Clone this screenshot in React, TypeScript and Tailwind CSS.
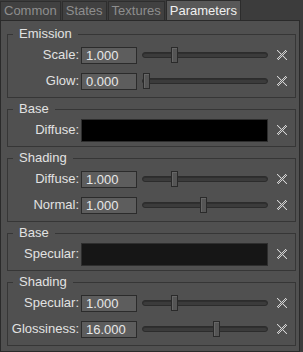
import React from "react";

type SliderRow = { label: string; value: string; thumb: number };
type ColorRow = { label: string; color: string };
type Group = { title: string; sliders?: SliderRow[]; colors?: ColorRow[] };

const tabs = ["Common", "States", "Textures", "Parameters"];

const groups: Group[] = [
  {
    title: "Emission",
    sliders: [
      { label: "Scale:", value: "1.000", thumb: 29 },
      { label: "Glow:", value: "0.000", thumb: 1 },
    ],
  },
  { title: "Base", colors: [{ label: "Diffuse:", color: "#000000" }] },
  {
    title: "Shading",
    sliders: [
      { label: "Diffuse:", value: "1.000", thumb: 29 },
      { label: "Normal:", value: "1.000", thumb: 58 },
    ],
  },
  { title: "Base", colors: [{ label: "Specular:", color: "#161616" }] },
  {
    title: "Shading",
    sliders: [
      { label: "Specular:", value: "1.000", thumb: 29 },
      { label: "Glossiness:", value: "16.000", thumb: 71 },
    ],
  },
];

// checkered "x" reset glyph, 10x10
function ResetIcon() {
  const cells: React.ReactNode[] = [];
  for (let y = 0; y < 10; y++) {
    for (let x = 0; x < 10; x++) {
      const onX = Math.abs(x - y) <= 1 || Math.abs(x + y - 9) <= 1;
      if (!onX) continue;
      const light = (x + y) % 2 === 0;
      cells.push(
        <rect key={`${x}-${y}`} x={x} y={y} width={1} height={1} fill={light ? "#d2d2d2" : "#626262"} />
      );
    }
  }
  return (
    <svg width={10} height={10} viewBox="0 0 10 10" shapeRendering="crispEdges" className="shrink-0">
      {cells}
    </svg>
  );
}

function Slider({ thumb }: { thumb: number }) {
  return (
    <div className="relative ml-[5px] h-[16px] w-[126px] flex items-center">
      <div className="h-[6px] w-full rounded-full border border-[#2c2c2c] bg-[#3b3b3b] shadow-[inset_0_1px_0_#2f2f2f]" />
      <div
        className="absolute top-0 h-[16px] w-[7px] border border-[#2a2a2a] bg-[#555555] shadow-[inset_1px_1px_0_#666666]"
        style={{ left: thumb }}
      />
    </div>
  );
}

function Label({ text }: { text: string }) {
  return <span className="w-[71px] shrink-0 text-right text-[#e2e2e2]">{text}</span>;
}

function GroupBox({ group }: { group: Group }) {
  return (
    <fieldset className="mt-[3px] first:mt-0 ml-[6px] mr-[3px] border border-[#363636] px-0 pb-[3px] pt-0">
      <legend className="ml-[5px] px-[6px] leading-[16px] text-[#e2e2e2]">{group.title}</legend>
      {group.sliders?.map((row) => (
        <div key={row.label} className="flex h-[26px] items-center">
          <Label text={row.label} />
          <div className="ml-[2px] h-[17px] w-[56px] shrink-0 border border-[#2b2b2b] bg-[#5d5d5d] pl-[4px] leading-[15px] text-[#e8e8e8]">
            {row.value}
          </div>
          <Slider thumb={row.thumb} />
          <div className="ml-[9px] flex">
            <ResetIcon />
          </div>
        </div>
      ))}
      {group.colors?.map((row) => (
        <div key={row.label} className="flex h-[26px] items-center">
          <Label text={row.label} />
          <div
            className="ml-[2px] h-[23px] w-[187px] shrink-0 border border-[#2e2e2e]"
            style={{ backgroundColor: row.color }}
          />
          <div className="ml-[9px] flex">
            <ResetIcon />
          </div>
        </div>
      ))}
    </fieldset>
  );
}

export default function App() {
  return (
    <div
      className="flex h-[352px] w-[303px] flex-col bg-[#3c3c3c] text-[13px]"
      style={{ fontFamily: '"Liberation Sans", Arial, sans-serif' }}
    >
      {/* Tabs */}
      <div className="flex h-[20px] items-end gap-[1px]">
        {tabs.map((t) => {
          const active = t === "Parameters";
          return (
            <div
              key={t}
              className={
                active
                  ? "flex h-[20px] items-center border border-b-0 border-[#2c2c2c] bg-[#585858] px-[3px] text-[#f0f0f0]"
                  : "flex h-[19px] items-center border border-b-0 border-[#2e2e2e] bg-[#414141] px-[3px] text-[#8e8e8e]"
              }
            >
              {t}
            </div>
          );
        })}
      </div>

      {/* Panel */}
      <div className="mr-[3px] flex flex-1 flex-col border border-[#2a2a2a] bg-[#505050] pt-[5px]">
        {groups.map((g, i) => (
          <GroupBox key={i} group={g} />
        ))}
      </div>
    </div>
  );
}
